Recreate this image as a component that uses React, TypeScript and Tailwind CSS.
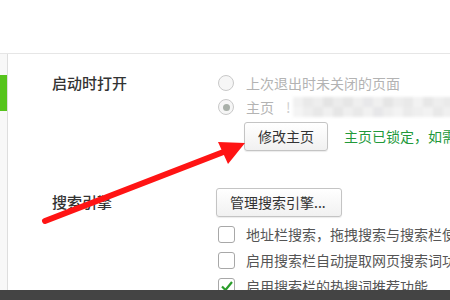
import React from "react";

const font = { fontFamily: '"Noto Sans CJK SC", "Noto Sans", sans-serif' };

const mosaic = [
  ["bg-[#f1f1f1]", "bg-[#e9e9e9]", "bg-[#eeeeee]", "bg-[#e4e4e4]", "bg-[#ececec]", "bg-[#e6e6e6]", "bg-[#efefef]", "bg-[#e8e8ea]", "bg-[#f0f0f0]", "bg-[#e5e5e5]", "bg-[#ededed]", "bg-[#e9e9e9]", "bg-[#f2f2f2]", "bg-[#e7e7e7]", "bg-[#eeeeee]", "bg-[#eaeaea]"],
  ["bg-[#f4f4f4]", "bg-[#eeeeee]", "bg-[#e8e8e8]", "bg-[#f0f0f0]", "bg-[#e6e6e6]", "bg-[#efefef]", "bg-[#e9e9e9]", "bg-[#f1f1f1]", "bg-[#e7e7e9]", "bg-[#eeeeee]", "bg-[#f3f3f3]", "bg-[#ebebeb]", "bg-[#efefef]", "bg-[#f2f2f2]", "bg-[#e9e9e9]", "bg-[#f0f0f0]"],
];

function Radio({ checked }: { checked?: boolean }) {
  return (
    <span className="w-4 h-4 rounded-full border border-[#c9c9c9] bg-[#f6f6f6] flex items-center justify-center shrink-0">
      {checked && <span className="w-[7px] h-[7px] rounded-full bg-[#a9b0a9]" />}
    </span>
  );
}

function Checkbox({ checked }: { checked?: boolean }) {
  return (
    <span className="w-[17px] h-[17px] rounded-[3px] border border-[#a8a8a8] bg-white flex items-center justify-center shrink-0">
      {checked && (
        <svg width="14" height="14" viewBox="0 0 14 14">
          <path d="M2 7.5 L5.5 11 L12 3" fill="none" stroke="#2a9d2a" strokeWidth="2.2" />
        </svg>
      )}
    </span>
  );
}

function Btn({ children, className }: { children: React.ReactNode; className?: string }) {
  return (
    <button
      className={
        "h-[29px] rounded-[3px] border border-[#c4c4c4] bg-gradient-to-b from-white to-[#f1f1f1] text-[14px] text-[#333] shadow-[0_1px_1px_rgba(0,0,0,0.08)] " +
        (className ?? "")
      }
    >
      {children}
    </button>
  );
}

export default function App() {
  return (
    <div className="relative w-[450px] h-[300px] overflow-hidden bg-white" style={font}>
      <div className="h-[54px] border-b border-[#e6e6e6]" />
      <div className="flex h-[236px] overflow-hidden">
        <div className="w-[8px] bg-[#f8f8f8] border-r border-[#dedede] shrink-0 pt-[21px]">
          <div className="h-[36px] bg-[#56c41c]" />
        </div>
        <div className="flex-1 pl-[44px] pt-[17px]">
          <div className="flex">
            <div className="w-[164px] h-[24px] flex items-center text-[15px] font-medium text-[#333]">启动时打开</div>
            <div className="flex flex-col">
              <div className="h-[24px] flex items-center gap-3 pl-[2px] text-[14px] text-[#b3b3b3]">
                <Radio />
                <span>上次退出时未关闭的页面</span>
              </div>
              <div className="h-[24px] flex items-center pl-[2px] text-[14px] text-[#b3b3b3]">
                <Radio checked />
                <span className="ml-3">主页</span>
                <span className="ml-[12px] text-[#cfcfcf]">!</span>
                <div className="ml-[2px] flex flex-col blur-[1.5px]">
                  {mosaic.map((row, i) => (
                    <div key={i} className="flex">
                      {row.map((c, j) => (
                        <div key={j} className={"w-[10px] h-[10px] " + c} />
                      ))}
                    </div>
                  ))}
                </div>
              </div>
              <div className="flex items-center mt-[3px] ml-[28px] whitespace-nowrap">
                <Btn className="w-[84px]">修改主页</Btn>
                <span className="ml-4 text-[14px] text-[#22993a]">主页已锁定，如需修改请先解锁</span>
              </div>
            </div>
          </div>
          <div className="flex mt-[37px]">
            <div className="w-[164px] h-[29px] flex items-center text-[15px] font-medium text-[#333]">搜索引擎</div>
            <div className="flex flex-col whitespace-nowrap">
              <Btn className="w-[126px] text-left pl-[13px]">管理搜索引擎...</Btn>
              <div className="mt-[4px] h-[26px] flex items-center gap-[11px] pl-[2px] text-[14px] text-[#555]">
                <Checkbox />
                <span>地址栏搜索，拖拽搜索与搜索栏使用相同搜索引擎</span>
              </div>
              <div className="h-[26px] flex items-center gap-[11px] pl-[2px] text-[14px] text-[#555]">
                <Checkbox />
                <span>启用搜索栏自动提取网页搜索词功能</span>
              </div>
              <div className="h-[26px] flex items-center gap-[11px] pl-[2px] text-[14px] text-[#555]">
                <Checkbox checked />
                <span>启用搜索栏的热搜词推荐功能</span>
              </div>
            </div>
          </div>
        </div>
      </div>
      <div className="h-[10px] bg-[#444]" />
      <svg className="absolute left-0 top-0 pointer-events-none" width="450" height="300" viewBox="0 0 450 300">
        <line x1="45" y1="221" x2="226" y2="151" stroke="#ff1414" strokeWidth="6" strokeLinecap="round" />
        <polygon points="245,143 218,142 228,164" fill="#ff1414" />
      </svg>
    </div>
  );
}
